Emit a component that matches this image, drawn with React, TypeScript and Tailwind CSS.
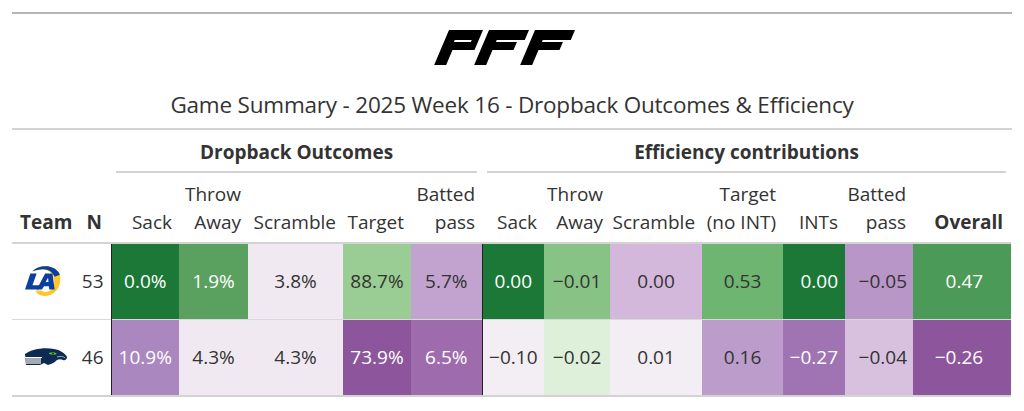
import React from 'react'

type Cell = { v: string; bg: string; fg: string; align?: string }

const W = 'text-white'
const D = 'text-[#333333]'

const teams: { n: string; logo: 'rams' | 'hawks'; drop: Cell[]; eff: Cell[] }[] = [
  {
    n: '53',
    logo: 'rams',
    drop: [
      { v: '0.0%', bg: 'bg-[#1b7837]', fg: W },
      { v: '1.9%', bg: 'bg-[#5aa160]', fg: W },
      { v: '3.8%', bg: 'bg-[#f1e9f2]', fg: D },
      { v: '88.7%', bg: 'bg-[#99cd93]', fg: D },
      { v: '5.7%', bg: 'bg-[#c2a3cf]', fg: D },
    ],
    eff: [
      { v: '0.00', bg: 'bg-[#1b7837]', fg: W },
      { v: '−0.01', bg: 'bg-[#86c384]', fg: D },
      { v: '0.00', bg: 'bg-[#d4b8dc]', fg: D },
      { v: '0.53', bg: 'bg-[#6fb572]', fg: D },
      { v: '0.00', bg: 'bg-[#1b7837]', fg: W, align: 'text-right pr-[7px]' },
      { v: '−0.05', bg: 'bg-[#b896c8]', fg: D, align: 'text-right pr-[6px]' },
      { v: '0.47', bg: 'bg-[#4b9a57]', fg: W, align: 'text-right pr-[28px]' },
    ],
  },
  {
    n: '46',
    logo: 'hawks',
    drop: [
      { v: '10.9%', bg: 'bg-[#ab87c0]', fg: W },
      { v: '4.3%', bg: 'bg-[#f1e9f2]', fg: D },
      { v: '4.3%', bg: 'bg-[#f1e9f2]', fg: D },
      { v: '73.9%', bg: 'bg-[#8d559c]', fg: W },
      { v: '6.5%', bg: 'bg-[#9e6cad]', fg: W },
    ],
    eff: [
      { v: '−0.10', bg: 'bg-[#f3edf4]', fg: D },
      { v: '−0.02', bg: 'bg-[#dff0da]', fg: D },
      { v: '0.01', bg: 'bg-[#f3edf4]', fg: D },
      { v: '0.16', bg: 'bg-[#bb9ccb]', fg: D },
      { v: '−0.27', bg: 'bg-[#a073b2]', fg: W, align: 'text-right pr-[7px]' },
      { v: '−0.04', bg: 'bg-[#d8c1df]', fg: D, align: 'text-right pr-[6px]' },
      { v: '−0.26', bg: 'bg-[#8d559c]', fg: W, align: 'text-right pr-[28px]' },
    ],
  },
]

const dropCols = [
  { w: 'w-[68px]', a: '', b: 'Sack' },
  { w: 'w-[69px]', a: 'Throw', b: 'Away' },
  { w: 'w-[95px]', a: '', b: 'Scramble' },
  { w: 'w-[68px]', a: '', b: 'Target' },
  { w: 'w-[71px]', a: 'Batted', b: 'pass' },
]

const effCols = [
  { w: 'w-[62px]', a: '', b: 'Sack' },
  { w: 'w-[66px]', a: 'Throw', b: 'Away' },
  { w: 'w-[92px]', a: '', b: 'Scramble' },
  { w: 'w-[81px]', a: 'Target', b: '(no INT)' },
  { w: 'w-[62px]', a: '', b: 'INTs' },
  { w: 'w-[68px]', a: 'Batted', b: 'pass' },
]

function PffLogo() {
  return (
    <svg width="143" height="35" viewBox="0 0 143 35">
      <g transform="translate(15 0) skewX(-23)" fill="#000">
        <path fillRule="evenodd" d="M0 0H34V20H12V35H0Z M10 10H27V12H10Z" />
        <path d="M40 0H80V10H52V12H73V20H52V35H40Z" />
        <path d="M86 0H126V10H98V12H119V20H98V35H86Z" />
      </g>
    </svg>
  )
}

function RamsLogo() {
  return (
    <svg width="38" height="34" viewBox="0 0 36 32">
      {/* horn */}
      <path d="M8 7 C14 0 30 0 34 10 C36 18 32 28 22 30 C16 31 12 28 11 25 L16 25 C18 27 24 27 27 23 C30 18 29 10 24 7 C19 4 13 5 8 7Z" fill="#ffc726" />
      <path d="M8 7 C14 0 30 0 34 10 L29 12 C27 7 22 4 16 5 C13 5 10 6 8 7Z" fill="#0b3f9e" />
      {/* L */}
      <path d="M6 9 H12 L8 20 H16 L14 24 H1 Z" fill="#0b3f9e" />
      {/* A */}
      <path d="M20 9 H27 L29 24 H24 L23.5 21 H19 L17 24 H12 Z M20.5 17 H23.2 L22.8 13 Z" fill="#0b3f9e" fillRule="evenodd" />
    </svg>
  )
}

function HawksLogo() {
  return (
    <svg width="44" height="20" viewBox="0 0 44 20">
      <path d="M1 7 C8 2 20 0 30 2 C36 3 41 6 43 10 C43 12 41 14 39 13 C37 12 35 12 33 13 C31 15 28 17 24 18 L20 16 L16 18 H2 Z" fill="#0c2a52" />
      <path d="M1 11 H17 V17 H2 Z" fill="#a5acaf" />
      <path d="M1 10 H18 V11 H1 Z" fill="#ffffff" />
      <path d="M25 6 C28 5 31 5 33 7 C31 8 28 8 25 7Z" fill="#69be28" />
      <circle cx="29" cy="6.5" r="1" fill="#0c2a52" />
      <path d="M33 10 C36 9 39 9 41 11" stroke="#a5acaf" strokeWidth="1" fill="none" />
    </svg>
  )
}

export default function App() {
  return (
    <div className="w-[1024px] h-[411px] bg-white pt-[12px] px-[12px] font-['Open_Sans',sans-serif] text-[#333333]">
      <div className="w-[1000px] border-t-[2px] border-[#b5b5b5]">
        <div className="h-[116px] flex flex-col items-center border-b-[2px] border-[#d3d3d3]">
          <div className="mt-[16px] ml-[-14px]">
            <PffLogo />
          </div>
          <div className="mt-[25px] text-[22.5px] leading-[30px] tracking-[-0.2px]">
            Game Summary - 2025 Week 16 - Dropback Outcomes &amp; Efficiency
          </div>
        </div>
        <table className="w-[999px] border-collapse table-fixed text-[19px]">
          <colgroup>
            <col className="w-[66px]" />
            <col className="w-[33px]" />
            {dropCols.map((c, i) => (
              <col key={i} className={c.w} />
            ))}
            {effCols.map((c, i) => (
              <col key={i} className={c.w} />
            ))}
            <col className="w-[98px]" />
          </colgroup>
          <thead>
            <tr className="h-[43px]">
              <th colSpan={2} />
              <th colSpan={5} className="px-[5px] pt-[6px] pb-0 font-bold">
                <div className="border-b-[2px] border-[#d3d3d3] pb-[3px] leading-[32px]">Dropback Outcomes</div>
              </th>
              <th colSpan={7} className="px-[5px] pt-[6px] pb-0 font-bold">
                <div className="border-b-[2px] border-[#d3d3d3] pb-[3px] leading-[32px]">Efficiency contributions</div>
              </th>
            </tr>
            <tr className="h-[70px] border-b-[2px] border-[#d3d3d3]">
              <th className="text-left pl-[8px] align-bottom pb-[6px] leading-[28px] font-bold">Team</th>
              <th className="text-right pr-[9px] align-bottom pb-[6px] leading-[28px] font-bold">N</th>
              {dropCols.map((c, i) => (
                <th key={i} className="text-right pr-[7px] align-bottom pb-[6px] leading-[28px] font-normal whitespace-nowrap">
                  {c.a && <div>{c.a}</div>}
                  <div>{c.b}</div>
                </th>
              ))}
              {effCols.map((c, i) => (
                <th key={i} className="text-right pr-[7px] align-bottom pb-[6px] leading-[28px] font-normal whitespace-nowrap">
                  {c.a && <div>{c.a}</div>}
                  <div>{c.b}</div>
                </th>
              ))}
              <th className="text-right pr-[8px] align-bottom pb-[6px] leading-[28px] font-bold">Overall</th>
            </tr>
          </thead>
          <tbody>
            {teams.map((t, r) => (
              <tr key={r} className={r === 0 ? 'h-[76px] border-b border-[#d9d9d9]' : 'h-[77px] border-b-[2px] border-[#d3d3d3]'}>
                <td className="pl-[12px]">
                  {t.logo === 'rams' ? <RamsLogo /> : <HawksLogo />}
                </td>
                <td className="text-right pr-[7px]">{t.n}</td>
                {t.drop.map((c, i) => (
                  <td key={i} className={`${c.bg} ${c.fg} ${c.align ?? 'text-center'} ${i === 0 ? 'border-l border-[#222222]' : ''}`}>
                    {c.v}
                  </td>
                ))}
                {t.eff.map((c, i) => (
                  <td key={i} className={`${c.bg} ${c.fg} ${c.align ?? 'text-center'} ${i === 0 ? 'border-l border-[#222222]' : ''}`}>
                    {c.v}
                  </td>
                ))}
              </tr>
            ))}
          </tbody>
        </table>
      </div>
    </div>
  )
}
